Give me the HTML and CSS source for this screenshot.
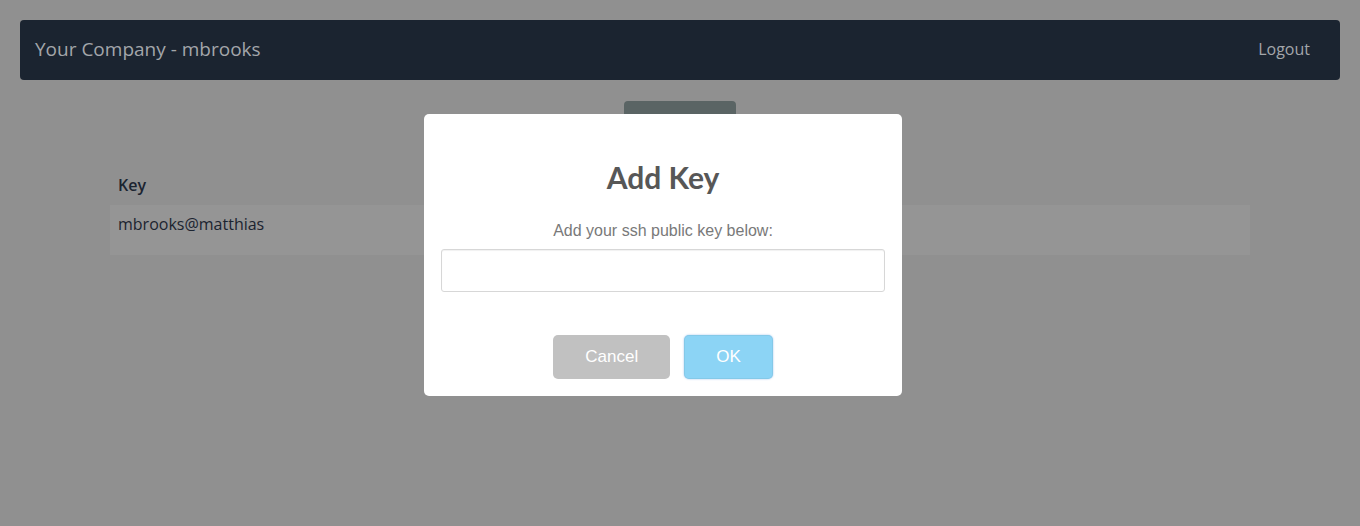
FILE: index.html
```html
<!DOCTYPE html>
<html>
<head>
<meta charset="utf-8">
<link rel="stylesheet" href="styles.css">
</head>
<body>
<div class="page">
  <nav class="navbar">
    <span class="brand">Your Company - mbrooks</span>
    <span class="logout">Logout</span>
  </nav>
  <div class="actions"><div class="add-btn"></div></div>
  <div class="keys">
    <div class="keys-head">Key</div>
    <div class="keys-row">mbrooks@matthias</div>
  </div>
</div>
<div class="overlay">
  <div class="modal">
    <h2 class="modal-title">Add Key</h2>
    <p class="modal-text">Add your ssh public key below:</p>
    <input class="modal-input" type="text">
    <div class="modal-buttons">
      <button class="btn btn-cancel">Cancel</button>
      <button class="btn btn-ok">OK</button>
    </div>
  </div>
</div>
</body>
</html>
```
FILE: styles.css
```css
* { box-sizing: border-box; }
html, body { margin: 0; height: 100%; }
body {
  background: #909090;
  font-family: "Open Sans", "Noto Sans", sans-serif;
  overflow: hidden;
}
.page { padding: 20px; }
.navbar {
  height: 60px;
  background: #1b2430;
  border-radius: 4px;
  display: flex;
  align-items: center;
  justify-content: space-between;
  padding: 0 30px 2px 15px;
}
.brand { color: #a3a6aa; font-size: 19px; }
.logout { color: #a3a6aa; font-size: 16px; }
.actions { display: flex; justify-content: center; margin-top: 21px; }
.add-btn { width: 112px; height: 38px; background: #5a6464; border-radius: 4px; }
.keys { margin: 29px 90px 0; }
.keys-head {
  color: #1b2430; font-size: 16px; font-weight: 600;
  padding: 7px 8px 10px; line-height: 20px;
}
.keys-row {
  background: #959595; height: 50px; color: #1b2430; font-size: 16px;
  padding: 9px 8px; line-height: 20px;
}
.overlay { position: fixed; inset: 0; }
.modal {
  position: absolute;
  top: 114px; left: 50%; margin-left: -256px;
  width: 478px;
  background: #fff;
  border-radius: 5px;
  padding: 17px;
  text-align: center;
}
.modal-title {
  margin: 26px 0 24px;
  font-family: Lato, sans-serif;
  font-size: 30px; font-weight: 700;
  color: #575757; line-height: 40px;
}
.modal-text {
  margin: 0;
  font-family: "Liberation Sans", Arial, sans-serif;
  font-size: 16px; color: #797979; line-height: 20px;
}
.modal-input {
  display: block;
  width: 100%; height: 43px;
  margin: 8px 0 0;
  border: 1px solid #d7d7d7; border-radius: 3px;
  box-shadow: inset 0 1px 1px rgba(0,0,0,0.06);
  font-size: 18px; padding: 0 12px;
  outline: none;
}
.modal-buttons { display: flex; justify-content: center; gap: 14px; margin-top: 43px; }
.btn {
  border: none; border-radius: 5px; color: #fff;
  font-family: "Liberation Sans", Arial, sans-serif;
  font-size: 17px; height: 44px; padding: 0 32px;
}
.btn-cancel { background: #c1c1c1; }
.btn-ok { background: #8cd4f5; box-shadow: 0 0 2px rgba(128,179,235,0.8), inset 0 0 0 1px rgba(0,0,0,0.05); }
```
